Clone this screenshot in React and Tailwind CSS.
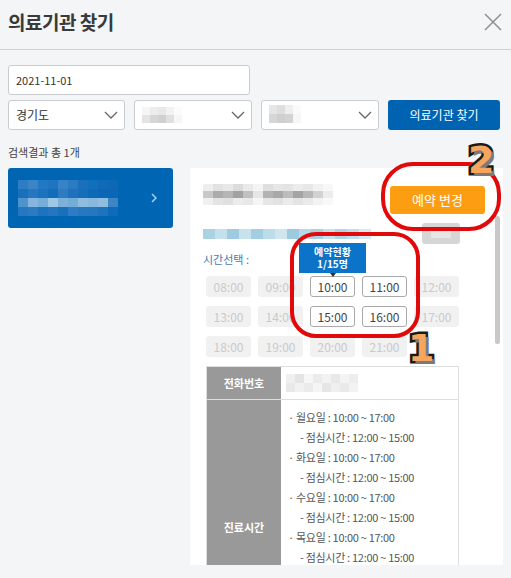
import React from "react";

const Mosaic = ({ rows, cell, className = "" }) => (
  <div className={`flex flex-col ${className}`}>
    {rows.map((row, i) => (
      <div key={i} className="flex">
        {row.map((c, j) => (
          <div key={j} className={`${cell} ${c}`} />
        ))}
      </div>
    ))}
  </div>
);

const Chevron = () => (
  <svg width="14" height="8" viewBox="0 0 14 8" className="shrink-0">
    <polyline points="1,1 7,7 13,1" fill="none" stroke="#666" strokeWidth="1.3" />
  </svg>
);

const SelectBox = ({ children, className = "" }) => (
  <div className={`h-[30px] bg-white border border-[#c9cdd1] rounded-[3px] flex items-center justify-between pl-[7px] pr-[6px] ${className}`}>
    <div className="flex items-center">{children}</div>
    <Chevron />
  </div>
);

const TimeCell = ({ label, active }) =>
  active ? (
    <div className="h-[21px] bg-white border border-[#a9a9a9] rounded-[3px] flex items-center justify-center text-[12px] text-[#444]">
      {label}
    </div>
  ) : (
    <div className="h-[21px] bg-[#f1f1f1] rounded-[3px] flex items-center justify-center text-[12px] text-[#cacaca]">
      {label}
    </div>
  );

const times = [
  ["08:00", false], ["09:00", false], ["10:00", true], ["11:00", true], ["12:00", false],
  ["13:00", false], ["14:00", false], ["15:00", true], ["16:00", true], ["17:00", false],
  ["18:00", false], ["19:00", false], ["20:00", false], ["21:00", false],
];

const schedule = [
  ["· 월요일 : 10:00 ~ 17:00", false],
  ["- 점심시간 : 12:00 ~ 15:00", true],
  ["· 화요일 : 10:00 ~ 17:00", false],
  ["- 점심시간 : 12:00 ~ 15:00", true],
  ["· 수요일 : 10:00 ~ 17:00", false],
  ["- 점심시간 : 12:00 ~ 15:00", true],
  ["· 목요일 : 10:00 ~ 17:00", false],
  ["- 점심시간 : 12:00 ~ 15:00", true],
  ["· 금요일 : 10:00 ~ 17:00", false],
  ["- 점심시간 : 12:00 ~ 15:00", true],
  ["· 토요일 : 휴진", false],
  ["· 일요일 : 휴진", false],
];

const titleBlur = [
  ["bg-[#eeeeee]", "bg-[#e2e2e2]", "bg-[#e8e8e8]", "bg-[#dcdcdc]", "bg-[#eaeaea]", "bg-[#f4f4f4]", "bg-[#dfdfdf]", "bg-[#e6e6e6]", "bg-[#e4e4e4]", "bg-[#ececec]", "bg-[#e7e7e7]", "bg-[#f1f1f1]", "bg-[#f7f7f7]"],
  ["bg-[#c8c8c8]", "bg-[#acacac]", "bg-[#b6b6b6]", "bg-[#a2a2a2]", "bg-[#c0c0c0]", "bg-[#e6e6e6]", "bg-[#b2b2b2]", "bg-[#a8a8a8]", "bg-[#bcbcbc]", "bg-[#a4a4a4]", "bg-[#b8b8b8]", "bg-[#d2d2d2]", "bg-[#ececec]"],
  ["bg-[#f0f0f0]", "bg-[#e4e4e4]", "bg-[#e0e0e0]", "bg-[#ececec]", "bg-[#e8e8e8]", "bg-[#f5f5f5]", "bg-[#e6e6e6]", "bg-[#e2e2e2]", "bg-[#ebebeb]", "bg-[#e4e4e4]", "bg-[#eaeaea]", "bg-[#f2f2f2]", "bg-[#f8f8f8]"],
];

const barBlur = [
  ["bg-[#a9d2e3]", "bg-[#c3e0ec]", "bg-[#9fcbe0]", "bg-[#c7e2ed]", "bg-[#a3cee1]", "bg-[#bddcea]", "bg-[#cfe6ef]", "bg-[#9ccadf]", "bg-[#b5d9e8]", "bg-[#a8d1e3]", "bg-[#c4e1ec]", "bg-[#aed4e5]", "bg-[#bfdeeb]", "bg-[#d6e9f1]"],
];

const cardBlur = [
  ["bg-[#2d7dc4]", "bg-[#3a85c8]", "bg-[#2278c2]", "bg-[#1f74bf]", "bg-[#3783c7]", "bg-[#2a7bc3]", "bg-[#1b70bc]", "bg-[#1170bb]", "bg-[#0f6bb8]", "bg-[#0d69b6]"],
  ["bg-[#1a70bb]", "bg-[#2777c0]", "bg-[#1c72bc]", "bg-[#136cb8]", "bg-[#2d7cc3]", "bg-[#2070bb]", "bg-[#166db9]", "bg-[#0e69b6]", "bg-[#0b67b5]", "bg-[#0b67b5]"],
  ["bg-[#4f93cc]", "bg-[#86b6dd]", "bg-[#77aed9]", "bg-[#9dc8e6]", "bg-[#7db1da]", "bg-[#74acd8]", "bg-[#8ebde0]", "bg-[#88b8de]", "bg-[#91bee0]", "bg-[#3c86c6]"],
  ["bg-[#2577c0]", "bg-[#2b7ac2]", "bg-[#1d73bd]", "bg-[#2477bf]", "bg-[#1970bb]", "bg-[#2e7cc3]", "bg-[#2878c0]", "bg-[#2577bf]", "bg-[#1e73bd]", "bg-[#0f6ab7]"],
];

const grayBlur2 = [
  ["bg-[#f5f5f5]", "bg-[#ececec]", "bg-[#e8e8e8]", "bg-[#f2f2f2]", "bg-[#fbfbfb]"],
  ["bg-[#e4e4e4]", "bg-[#d6d6d6]", "bg-[#d0d0d0]", "bg-[#e0e0e0]", "bg-[#f6f6f6]"],
];

const grayBlur3 = [
  ["bg-[#e6e6e6]", "bg-[#dedede]", "bg-[#eeeeee]", "bg-[#fafafa]", "bg-white"],
  ["bg-[#d6d6d6]", "bg-[#cfcfcf]", "bg-[#d3d3d3]", "bg-[#f6f6f6]", "bg-white"],
];

const phoneBlur = [
  ["bg-[#efefef]", "bg-[#e4e4e4]", "bg-[#f6f6f6]", "bg-[#ebebeb]", "bg-[#f2f2f2]", "bg-[#e8e8e8]", "bg-[#f4f4f4]", "bg-[#ededed]"],
  ["bg-[#e9e9e9]", "bg-[#f1f1f1]", "bg-[#ebebeb]", "bg-[#f5f5f5]", "bg-[#e6e6e6]", "bg-[#efefef]", "bg-[#e9e9e9]", "bg-[#f3f3f3]"],
];

export default function App() {
  return (
    <div className="relative w-[511px] h-[578px] overflow-hidden bg-[#f3f5f7] text-[#333] font-['Noto_Sans_CJK_KR','Noto_Sans',sans-serif]">
      {/* header */}
      <div className="h-[50px] border-b border-[#cdd1d5] flex items-center justify-between pl-[8px] pr-[8px]">
        <h1 className="text-[19px] font-bold text-[#3a3a3a] tracking-[-0.5px] leading-none -mt-[6px]">의료기관 찾기</h1>
        <svg width="20" height="20" viewBox="0 0 20 20" className="-mt-[6px]">
          <path d="M2 2 L18 18 M18 2 L2 18" stroke="#8f8f8f" strokeWidth="1.5" fill="none" />
        </svg>
      </div>

      {/* search form */}
      <div className="pl-[8px] pr-[11px] pt-[15px]">
        <div className="w-[242px] h-[30px] bg-white border border-[#c9cdd1] rounded-[3px] flex items-center pl-[7px] text-[11px] text-[#333]">
          2021-11-01
        </div>
        <div className="flex gap-[9px] mt-[5px]">
          <SelectBox className="w-[117px]">
            <span className="text-[12px] text-[#333]">경기도</span>
          </SelectBox>
          <SelectBox className="w-[118px]">
            <Mosaic rows={grayBlur2} cell="w-[8px] h-[8px]" />
          </SelectBox>
          <SelectBox className="w-[118px]">
            <Mosaic rows={grayBlur3} cell="w-[8px] h-[9px]" className="-mt-[2px]" />
          </SelectBox>
          <button className="w-[112px] h-[30px] bg-[#0063b1] rounded-[3px] text-white text-[12px] flex items-center justify-center">
            의료기관 찾기
          </button>
        </div>
        <p className="text-[11px] text-[#444] mt-[15px] leading-[14px]">검색결과 총 1개</p>
      </div>

      {/* results */}
      <div className="flex pl-[8px] mt-[9px]">
        <div className="w-[165px] h-[60px] bg-[#0065b3] rounded-[3px] flex items-center justify-between pl-[10px] pr-[16px]">
          <Mosaic rows={cardBlur} cell="w-[10px] h-[9px]" />
          <svg width="6" height="10" viewBox="0 0 6 10">
            <polyline points="1,1 5,5 1,9" fill="none" stroke="#a9d0f0" strokeWidth="1.5" />
          </svg>
        </div>

        <div className="relative ml-[17px] w-[313px] h-[397px] bg-white overflow-hidden">
          {/* scrollbar */}
          <div className="absolute right-[3px] top-[48px] w-[5px] h-[128px] bg-[#c8c8c8] rounded-full" />

          <div className="flex items-start pt-[16px] pl-[13px]">
            <Mosaic rows={titleBlur} cell="w-[10px] h-[7px]" />
            <button className="ml-[57px] mt-[2px] w-[95px] h-[28px] bg-[#fd9e12] rounded-[3px] text-white text-[13px] flex items-center justify-center">
              예약 변경
            </button>
          </div>

          <div className="flex items-center pl-[13px] mt-[9px]">
            <Mosaic rows={barBlur} cell="w-[12px] h-[10px]" />
            <div className="ml-[51px] w-[38px] h-[21px] bg-[#d6d6d6] rounded-[3px] flex items-center justify-center">
              <div className="w-[20px] h-[8px] bg-[#e6e6e6]" />
            </div>
          </div>

          <p className="pl-[13px] mt-[8px] text-[11px] text-[#4a7bb0] leading-[14px]">시간선택 :</p>

          {/* tooltip */}
          <div className="absolute left-[109px] top-[75px] w-[67px] h-[30px] bg-[#0b74c8] text-white text-[10px] font-bold leading-[12px] flex flex-col items-center justify-center">
            <span>예약현황</span>
            <span>1/15명</span>
            <div className="absolute -bottom-[4px] left-[31px] w-0 h-0 border-l-[3px] border-r-[3px] border-t-[4px] border-l-transparent border-r-transparent border-t-[#333]" />
          </div>

          <div className="grid grid-cols-[repeat(5,45px)] gap-x-[7px] gap-y-[9px] pl-[16px] mt-[10px]">
            {times.map(([t, a]) => (
              <TimeCell key={t} label={t} active={a} />
            ))}
          </div>

          {/* info table */}
          <div className="ml-[16px] mt-[9px] w-[253px] border border-[#dedede] text-[11px]">
            <div className="flex h-[33px] border-b border-[#dedede]">
              <div className="w-[74px] bg-[#999] text-white font-bold flex items-center justify-center">전화번호</div>
              <div className="flex items-center pl-[5px]">
                <Mosaic rows={phoneBlur} cell="w-[9px] h-[9px]" />
              </div>
            </div>
            <div className="flex">
              <div className="w-[74px] bg-[#999] text-white font-bold flex items-center justify-center">진료시간</div>
              <div className="pl-[7px] py-[7px] text-[#555]">
                {schedule.map(([line, sub], i) => (
                  <p key={i} className={`leading-[20px] tracking-[-0.3px] ${sub ? "pl-[12px]" : ""}`}>{line}</p>
                ))}
              </div>
            </div>
          </div>
        </div>
      </div>

      {/* annotations */}
      <div className="absolute left-[381px] top-[162px] w-[120px] h-[69px] border-[4px] border-[#e10a0a] rounded-[32px]" />
      <div className="absolute left-[290px] top-[232px] w-[130px] h-[106px] border-[4px] border-[#e10a0a] rounded-[26px]" />
      <span className="absolute left-[468px] top-[141px] text-[38px] leading-none font-bold text-[#f6a65c] font-['DejaVu_Sans',sans-serif] [-webkit-text-stroke:5px_#1a1a1a] [paint-order:stroke_fill] [text-shadow:3px_3px_0_#7a7a7a]">2</span>
      <span className="absolute left-[408px] top-[329px] text-[38px] leading-none font-bold text-[#f6a65c] font-['DejaVu_Sans',sans-serif] [-webkit-text-stroke:5px_#1a1a1a] [paint-order:stroke_fill] [text-shadow:3px_3px_0_#7a7a7a]">1</span>
    </div>
  );
}
